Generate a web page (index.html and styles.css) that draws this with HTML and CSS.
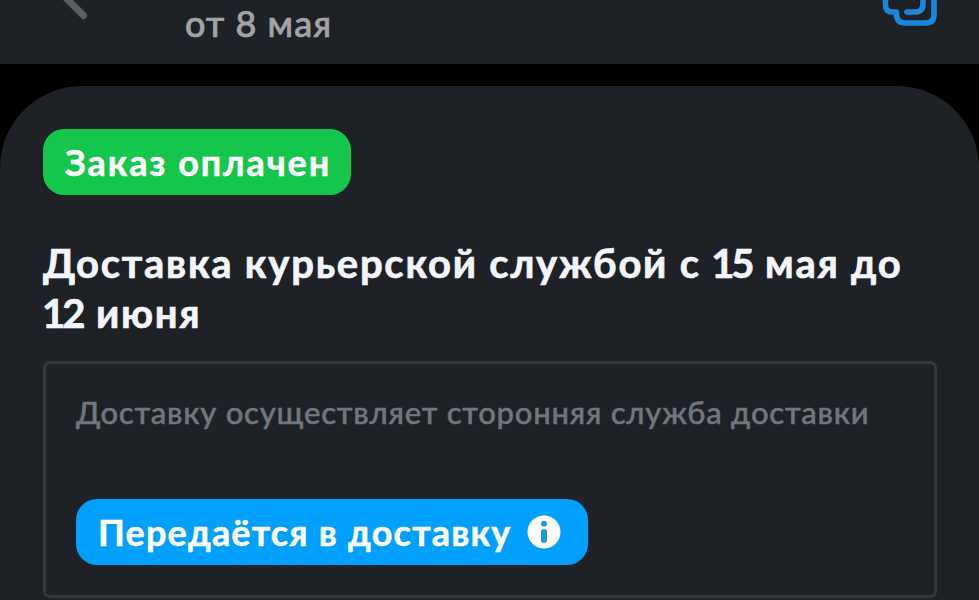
FILE: index.html
```
<!DOCTYPE html>
<html lang="ru">
<head>
  <meta charset="UTF-8" />
  <title>Заказ</title>
  <link rel="stylesheet" href="styles.css">
</head>
<body>
  <header class="topbar">
    <svg class="back" width="44" height="64" viewBox="0 0 44 64" aria-hidden="true">
      <path d="M27.500 -33 L3 -9 L27.500 15.500" />
    </svg>
    <div class="date"><span class="text">от 8 мая</span></div>
    <svg class="copy" width="58" height="64" viewBox="0 0 58 64" aria-hidden="true">
      <path d="M5.500 -20 V4.500 Q5.500 12 12 12 H16.500 V14 Q16.500 23 25.500 23 H46 Q54 23 54 14.500 V-2 Q54 -10 46.500 -10" />
      <path d="M43 -20 V4 Q43 12 35 12 H27" />
    </svg>
  </header>

  <main class="card">
    <div class="badge paid"><span class="text">Заказ оплачен</span></div>
    <h1><span class="text">Доставка курьерской службой с <span class="num">15</span> мая до</span><br><span class="text"><span class="num">12</span> июня</span></h1>

    <section class="delivery">
      <p><span class="text">Доставку осуществляет сторонняя служба доставки</span></p>
      <div class="badge status">
        <span class="text">Передаётся в доставку</span>
        <svg class="info" width="34" height="34" viewBox="0 0 34 34" aria-hidden="true">
          <circle class="disc" cx="17" cy="17" r="16.500" />
          <circle class="mark" cx="17" cy="8.700" r="2.900" />
          <rect class="mark" x="14" y="14" width="6" height="14" rx="3" />
        </svg>
      </div>
    </section>
  </main>
</body>
</html>
```

FILE: styles.css
```
* {
  box-sizing: border-box;
}
body {
  margin: 0;
  height: 600px;
  overflow: hidden;
  background: #000;
  color: #f2f5fc;
  font-family: Lato, 'Open Sans', sans-serif;
}
.text {
  white-space: nowrap;
}
.topbar {
  display: flex;
  height: 64px;
  padding: 0 41px 0 56px;
  overflow: hidden;
  background: #1e2125;
}
.back {
  fill: none;
  stroke: #5d5f63;
  stroke-width: 7;
  stroke-linecap: round;
}
.date {
  margin-left: 85px;
  padding-top: 1px;
  color: #a2a3a7;
  font-size: 36px;
  font-weight: 500;
  line-height: 44px;
  letter-spacing: 1.1px;
  -webkit-text-stroke: 0.7px #a2a3a7;
}
.copy {
  margin-left: auto;
  fill: none;
  stroke: #1988dc;
  stroke-width: 5.6;
  stroke-linecap: round;
  stroke-linejoin: round;
}
.card {
  height: 540px;
  margin-top: 22px;
  padding: 43px 42px 0 43px;
  border-radius: 82px 82px 0 0;
  background: #1e2125;
}
.badge {
  display: flex;
  align-items: center;
  height: 66px;
  border-radius: 21px;
  color: #fff;
  font-size: 36px;
  font-weight: 700;
  -webkit-text-stroke: 0.5px #fff;
}
.paid {
  width: 308px;
  padding: 0 0 1px 22px;
  letter-spacing: 1.9px;
  background: #14c64c;
}
h1 {
  margin: 43px 0 0;
  font-size: 40px;
  font-weight: 700;
  line-height: 50px;
  letter-spacing: 1.75px;
  -webkit-text-stroke: 0.7px #f2f5fc;
}
.num {
  margin: 0 2px 0 -1px;
  letter-spacing: -3px;
}
.delivery {
  height: 237px;
  margin-top: 23px;
  padding: 28px 30px 0;
  border: 3px solid #35383d;
  border-radius: 7px;
}
.delivery p {
  margin: 0;
  color: #71757d;
  font-size: 31px;
  font-weight: 500;
  line-height: 40px;
  letter-spacing: 0.77px;
  -webkit-text-stroke: 0.5px #71757d;
}
.status {
  width: 512px;
  margin-top: 67px;
  padding: 0 27px 0 22px;
  justify-content: space-between;
  letter-spacing: 1.2px;
  background: #00a0ff;
}
.info .disc {
  fill: #fff;
}
.info .mark {
  fill: #1c96e4;
}
```
